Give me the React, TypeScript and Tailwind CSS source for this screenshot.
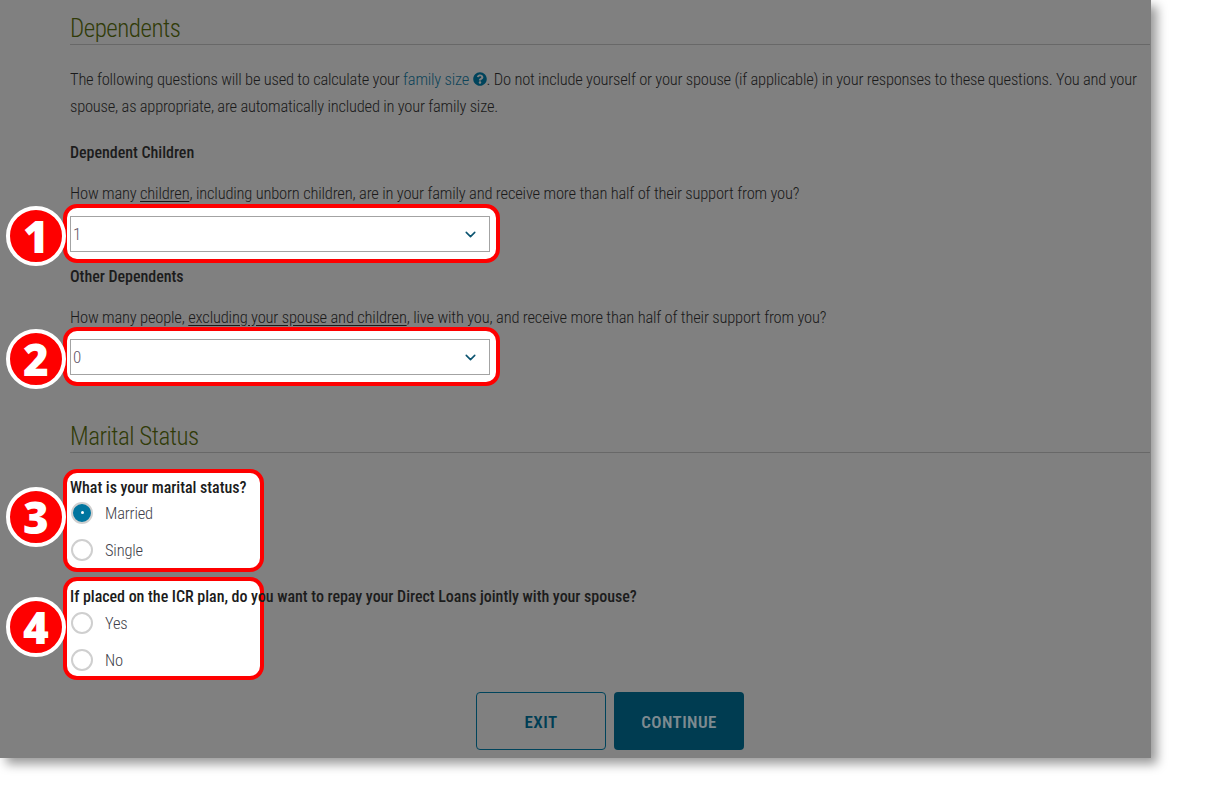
import { ChevronDown } from "lucide-react";
import { FaQuestionCircle } from "react-icons/fa";

function Badge({ n, className }: { n: number; className: string }) {
  return (
    <div
      className={`absolute left-[-61px] flex h-[60px] w-[60px] items-center justify-center rounded-full border-[4px] border-white bg-[#fe0000] text-[44px] font-extrabold leading-none text-white font-stretch-[100%] ${className}`}
      style={{ fontFamily: '"Open Sans", sans-serif' }}
    >
      {n}
    </div>
  );
}

function Heading({ children }: { children: string }) {
  return (
    <h2 className="flex h-[45px] items-end border-b border-[#686868] text-[25px] font-light leading-[30px] tracking-[-0.5px] text-[#303b08]">
      {children}
    </h2>
  );
}

function SelectBox({ value, n, badgeClass }: { value: string; n: number; badgeClass: string }) {
  return (
    <div className="relative ml-[-7px] h-[59px] w-[437px] rounded-[14px] border-[4px] border-[#fe0000] bg-white pl-[3px] pt-[8px]">
      <Badge n={n} className={badgeClass} />
      <div className="flex h-[36px] w-[420px] items-center justify-between border border-[#a3a3a3] bg-white pl-[2px] pr-[10px] text-[17px] font-light text-[#5f5366]">
        <span className="pt-[2px]">{value}</span>
        <ChevronDown className="h-[17px] w-[17px] text-[#0b5470]" strokeWidth={2.2} />
      </div>
    </div>
  );
}

function Radio({ label, checked }: { label: string; checked?: boolean }) {
  return (
    <div className="flex h-[37px] items-center">
      {checked ? (
        <span className="flex h-[22px] w-[22px] items-center justify-center rounded-full border-2 border-[#cfcfcf] bg-[#00759f]">
          <span className="h-[3px] w-[3px] rounded-full bg-white" />
        </span>
      ) : (
        <span className="h-[22px] w-[22px] rounded-full border-2 border-[#cfcfcf] bg-white" />
      )}
      <span className="ml-[12px] mt-[2px] text-[16.5px] font-light leading-[24px] tracking-[-0.18px] text-[#3f3f4a]">{label}</span>
    </div>
  );
}

function RadioGroup({
  title,
  options,
  n,
  badgeClass,
  className,
  titleClass,
  listClass,
}: {
  title: string;
  options: { label: string; checked?: boolean }[];
  n: number;
  badgeClass: string;
  className: string;
  titleClass: string;
  listClass: string;
}) {
  return (
    <div className={`relative ml-[-7px] h-[103px] w-[201px] rounded-[14px] border-[4px] border-[#fe0000] bg-white pl-[3px] ${className}`}>
      <Badge n={n} className={badgeClass} />
      <div className={`h-[24px] whitespace-nowrap text-[16px] font-medium leading-[26px] tracking-[-0.03px] text-[#1c1c1c] ${titleClass}`}>{title}</div>
      <div className={`pl-[1px] ${listClass}`}>
        {options.map((o) => (
          <Radio key={o.label} label={o.label} checked={o.checked} />
        ))}
      </div>
    </div>
  );
}

export default function App() {
  return (
    <div className="h-[800px] w-[1207px] overflow-hidden bg-white font-stretch-[75%]" style={{ fontFamily: "Roboto, sans-serif" }}>
      <div className="h-[758px] w-[1151px] bg-[#808080] pl-[70px] pr-[1px] shadow-[6px_6px_10px_rgba(0,0,0,0.4)]">
        <Heading>Dependents</Heading>

        <p className="mt-[21px] w-[1075px] text-[16.5px] font-light leading-[27px] tracking-[-0.21px] text-[#1a1a1a]">
          The following questions will be used to calculate your <span className="text-[#0e4459]">family size</span>{" "}
          <FaQuestionCircle className="inline h-[14px] w-[14px] align-[-1px] text-[#00445c]" />. Do not include yourself or your spouse (if applicable) in your responses to these questions. You and your spouse, as appropriate, are automatically included in your family size.
        </p>

        <div className="mt-[20px] h-[24px] text-[16px] font-medium leading-[26px] tracking-[-0.03px] text-[#1c1c1c]">Dependent Children</div>
        <p className="mt-[17px] h-[23px] text-[16.5px] font-light leading-[26px] tracking-[-0.18px] text-[#1a1a1a]">
          How many <span className="underline underline-offset-2">children</span>, including unborn children, are in your family and receive more than half of their support from you?
        </p>
        <SelectBox value="1" n={1} badgeClass="top-[-2px]" />

        <div className="mt-[1px] h-[24px] text-[16px] font-medium leading-[26px] tracking-[-0.03px] text-[#1c1c1c]">Other Dependents</div>
        <p className="mt-[17px] h-[22px] text-[16.5px] font-light leading-[26px] tracking-[-0.18px] text-[#1a1a1a]">
          How many people, <span className="underline underline-offset-2">excluding your spouse and children</span>, live with you, and receive more than half of their support from you?
        </p>
        <SelectBox value="0" n={2} badgeClass="top-[-2px]" />

        <div className="mt-[22px]">
          <Heading>Marital Status</Heading>
        </div>

        <RadioGroup
          className="mt-[16px]"
          titleClass="mt-[2px]"
          listClass="mt-[-5px]"
          title="What is your marital status?"
          options={[{ label: "Married", checked: true }, { label: "Single" }]}
          n={3}
          badgeClass="top-[14px]"
        />
        <RadioGroup
          className="mt-[5px]"
          titleClass="mt-[3px]"
          listClass="mt-[-4px]"
          title="If placed on the ICR plan, do you want to repay your Direct Loans jointly with your spouse?"
          options={[{ label: "Yes" }, { label: "No" }]}
          n={4}
          badgeClass="top-[16px]"
        />

        <div className="mt-[12px] flex gap-[8px] pl-[406px]">
          <button className="h-[58px] w-[130px] rounded-[4px] border border-[#00445c] pt-[4px] text-[17px] font-semibold tracking-[0.4px] text-[#003e55]">EXIT</button>
          <button className="h-[58px] w-[130px] rounded-[4px] bg-[#003c51] pt-[4px] text-[17px] font-semibold tracking-[0.4px] text-[#7d8a90]">CONTINUE</button>
        </div>
      </div>
    </div>
  );
}
